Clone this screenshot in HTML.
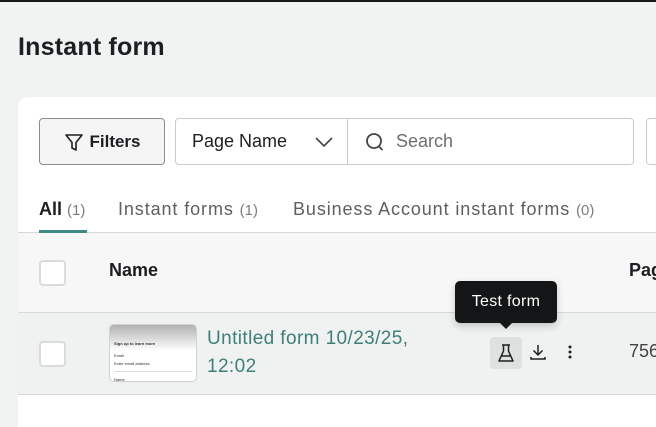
<!DOCTYPE html>
<html><head><meta charset="utf-8"><style>
*{box-sizing:border-box;margin:0;padding:0}
body{width:656px;height:412px;overflow:hidden;background:#f1f3f2;font-family:"Liberation Sans",sans-serif;color:#1c1e21;position:relative}
.topline{position:absolute;left:0;top:0;width:656px;height:2px;background:#1a1a1a}
h1{position:absolute;left:18px;top:33px;font-size:25px;font-weight:bold;color:#1c1e21;letter-spacing:0.2px}
.card{position:absolute;left:18px;top:97px;width:660px;height:330px;background:#fff;border-radius:10px 0 0 0;overflow:hidden}
.btn{position:absolute;top:21px;height:47px;border:1px solid #c9cbcc;border-radius:4px;display:flex;align-items:center;font-size:18px}
.filters{left:21px;width:126px;background:#f5f5f5;border-color:#8a8c8e;justify-content:center;font-weight:500;color:#1c1e21}
.sel{left:157px;width:459px;background:#fff}
.sel .pn{width:172px;border-right:1px solid #c9cbcc;height:100%;display:flex;align-items:center;padding-left:16px;color:#1c1e21;position:relative}
.sel .sr{display:flex;align-items:center;padding-left:16px;color:#6b6e70}
.extra{left:628px;width:40px}
.tabs{position:absolute;top:102px;left:0;font-size:18px;color:#5d6063;letter-spacing:0.9px}
.tabs div{position:absolute;white-space:nowrap}
.tabs span.c{color:#7a7d80;font-size:15px;letter-spacing:0}
.tabline{position:absolute;left:0;top:135px;width:660px;height:1px;background:#d6d8d9}
.tabact{position:absolute;left:21px;top:133px;width:48px;height:3px;background:#3e8b83}
.thead{position:absolute;left:0;top:136px;width:660px;height:80px;background:#f7f7f7;border-bottom:1px solid #d6d8d9}
.row{position:absolute;left:0;top:216px;width:660px;height:82px;background:#f0f2f1;border-bottom:1px solid #d6d8d9}
.cb{position:absolute;left:21px;width:27px;height:26px;border:2px solid #d9dbdc;border-radius:4px;background:#fff}
.thumb{position:absolute;left:91px;top:11px;width:88px;height:58px;border:1px solid #cfd1d2;border-radius:5px;background:linear-gradient(#b0b0b0,#fff 45%);overflow:hidden;font-size:4px;color:#333}
.link{position:absolute;left:189px;top:12px;font-size:19px;line-height:28px;color:#3f7f79;letter-spacing:0.4px}
.tip{position:absolute;left:455px;top:281px;width:102px;height:42px;background:#141517;border-radius:5px;color:#fff;font-size:16px;letter-spacing:0.3px;display:flex;align-items:center;justify-content:center;box-shadow:0 3px 8px rgba(0,0,0,.2)}
.tip:after{content:"";position:absolute;left:45px;bottom:-6px;border:6px solid transparent;border-top-color:#141517;border-bottom:0}
</style></head><body>
<div class="topline"></div>
<h1>Instant form</h1>
<div class="card">
 <div class="btn filters"><svg width="22" height="22" viewBox="0 0 22 22" style="margin-right:4px"><path d="M3 4h16l-6 7.5V19l-4-2v-5.5z" fill="none" stroke="#1c1e21" stroke-width="1.6" stroke-linejoin="round"/></svg><b style="font-weight:bold;font-size:17px">Filters</b></div>
 <div class="btn sel"><div class="pn">Page Name<svg width="18" height="12" viewBox="0 0 18 12" style="position:absolute;right:14px;top:17px"><path d="M1 2l8 8 8-8" fill="none" stroke="#444" stroke-width="1.6"/></svg></div>
 <div class="sr"><svg width="22" height="22" viewBox="0 0 22 22" style="margin-right:10px"><circle cx="10" cy="10" r="7" fill="none" stroke="#444" stroke-width="1.8"/><path d="M14.5 15l4 4" stroke="#444" stroke-width="1.8"/></svg>Search</div></div>
 <div class="btn extra"></div>
 <div class="tabs"><div style="left:21px;color:#1c1e21;font-weight:bold;letter-spacing:0">All <span class="c" style="font-weight:400">(1)</span></div><div style="left:100px">Instant forms <span class="c">(1)</span></div><div style="left:275px">Business Account instant forms <span class="c">(0)</span></div></div>
 <div class="tabline"></div><div class="tabact"></div>
 <div class="thead"><div class="cb" style="top:27px"></div><div style="position:absolute;left:91px;top:27px;font-size:18px;font-weight:bold">Name</div><div style="position:absolute;left:611px;top:27px;font-size:18px;font-weight:bold">Page</div></div>
 <div class="row"><div class="cb" style="top:28px"></div>
  <div class="thumb"><div style="position:absolute;left:4px;top:16px;font-weight:bold">Sign up to learn more</div><div style="position:absolute;left:4px;top:28px">Email</div><div style="position:absolute;left:4px;top:36px">Enter email address</div><div style="position:absolute;left:4px;top:46px;width:78px;height:1px;background:#ddd"></div><div style="position:absolute;left:4px;top:52px">Name</div></div>
  <div class="link">Untitled form 10/23/25,<br>12:02</div>
  <div style="position:absolute;left:472px;top:24px;width:32px;height:32px;background:#dfe1e1;border-radius:4px"></div>
  <svg style="position:absolute;left:478px;top:30px" width="20" height="20" viewBox="0 0 20 20"><path d="M6 2h8M7.5 2v6L3 18h14L12.5 8V2M5 13h10" fill="none" stroke="#1c1e21" stroke-width="1.5" stroke-linejoin="round"/></svg>
  <svg style="position:absolute;left:511px;top:30px" width="18" height="18" viewBox="0 0 18 18"><path d="M9 2v10M4.5 7.5L9 12l4.5-4.5M2 14v2h14v-2" fill="none" stroke="#1c1e21" stroke-width="1.5"/></svg>
  <svg style="position:absolute;left:548px;top:31px" width="8" height="16" viewBox="0 0 8 16"><circle cx="4" cy="3" r="1.5" fill="#1c1e21"/><circle cx="4" cy="8" r="1.5" fill="#1c1e21"/><circle cx="4" cy="13" r="1.5" fill="#1c1e21"/></svg>
  <div style="position:absolute;left:611px;top:28px;font-size:18px;color:#444">7565</div>
 </div>
</div>
<div class="tip">Test form</div>
</body></html>
